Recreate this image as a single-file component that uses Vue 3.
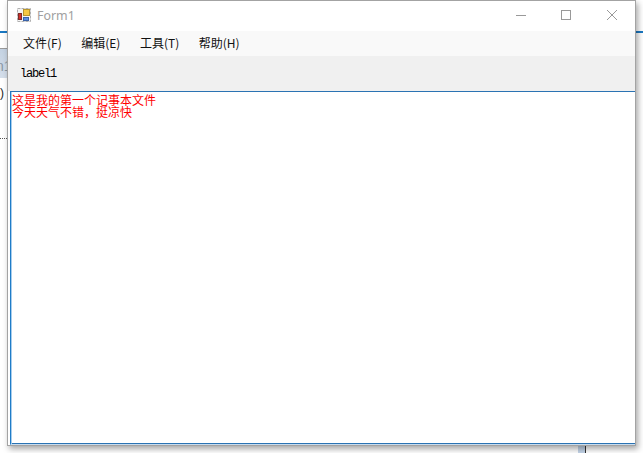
<script setup>
const menus = ['文件(F)', '编辑(E)', '工具(T)', '帮助(H)']
</script>

<template>
  <div class="desktop">
    <div class="peek-bar"></div>
    <div class="peek-tab">n1</div>
    <div class="peek-paren">)</div>
    <div class="peek-dots"></div>
    <div class="peek-right"></div>
    <div class="peek-bottom"><i></i><b></b></div>
    <div class="window">
      <div class="titlebar">
        <svg class="app-icon" width="16" height="16" viewBox="0 0 16 16">
          <rect x="0.5" y="0.5" width="13" height="13" fill="#f4f4f4" stroke="#b0b0b0" stroke-dasharray="3 1" />
          <rect x="6.5" y="1.5" width="6" height="6" fill="#f6c843" stroke="#b8962f" />
          <rect x="1.5" y="5.5" width="3" height="6" fill="#d0302a" stroke="#7c2b28" />
          <rect x="6.5" y="9.5" width="5" height="3" fill="#5a8fe0" stroke="#3a62a8" />
        </svg>
        <span class="title">Form1</span>
        <div class="controls">
          <svg width="12" height="12" viewBox="0 0 12 12"><path d="M0 6.5H10" stroke="#999" /></svg>
          <svg width="12" height="12" viewBox="0 0 12 12"><rect x="0.5" y="1.5" width="9" height="9" fill="none" stroke="#999" /></svg>
          <svg width="12" height="12" viewBox="0 0 12 12"><path d="M1 1L11 11M11 1L1 11" stroke="#999" /></svg>
        </div>
      </div>
      <div class="menubar">
        <span v-for="m in menus" :key="m" class="menu-item">{{ m }}</span>
      </div>
      <div class="labelbar"><span class="label">label1</span></div>
      <div class="editor">
        <div>这是我的第一个记事本文件</div>
        <div>今天天气不错，挺凉快</div>
      </div>
    </div>
  </div>
</template>

<style>
html, body { margin: 0; padding: 0; background: #fff; overflow: hidden; }
</style>

<style scoped>
.desktop {
  position: relative;
  width: 643px;
  height: 453px;
  overflow: hidden;
  background: #fff;
}
.peek-bar { position: absolute; left: 0; top: 31px; width: 7px; height: 2px; background: #1a78c2; }
.peek-tab {
  position: absolute; left: 0; top: 48px; width: 7px; height: 29px;
  border-top: 1px solid #9a9a9a;
  background: linear-gradient(#c4d2e2, #d4deea);
  color: #8a97a5; font: 14px/34px "Liberation Sans", sans-serif; overflow: hidden; text-indent: -4px;
}
.peek-paren { position: absolute; left: 0; top: 85px; font: 12px/16px "Liberation Sans", sans-serif; color: #222; }
.peek-dots { position: absolute; left: 0; top: 138px; width: 7px; height: 1px; border-top: 1px dotted #555; }
.peek-right { position: absolute; left: 636px; top: 31px; width: 7px; height: 2px; background: #1a78c2; }
.peek-bottom { position: absolute; left: 578px; top: 445px; height: 8px; display: flex; }
.peek-bottom i { width: 7px; box-sizing: border-box; background: #c3d4e8; }
.peek-bottom b { width: 1px; background: #333; }
.window {
  position: absolute;
  left: 7px;
  top: 0;
  width: 629px;
  height: 446px;
  box-sizing: border-box;
  border: 1px solid #a3a3a3;
  background: #fff;
  box-shadow: 2px 3px 6px rgba(0, 0, 0, 0.35);
  display: flex;
  flex-direction: column;
}
.titlebar { height: 30px; flex: none; display: flex; align-items: center; padding-left: 9px; background: #fff; }
.app-icon { flex: none; }
.title { margin-left: 4px; padding-bottom: 1px; font: 12.4px "Noto Sans", "Open Sans", sans-serif; color: #a0a0a0; }
.controls { margin-left: auto; display: flex; gap: 33px; padding-right: 17px; padding-bottom: 2px; }
.menubar { height: 25px; flex: none; box-sizing: border-box; padding: 0 0 2px 15px; display: flex; align-items: center; gap: 19.5px; background: #f9f9f9; }
.menu-item { font: 12px "Noto Sans CJK SC", "Liberation Sans", sans-serif; color: #111; }
.labelbar { height: 35px; flex: none; display: flex; align-items: center; padding-left: 12px; background: #f0f0f0; }
.label { font: 12px "Liberation Mono", monospace; letter-spacing: -1.2px; color: #000; }
.editor {
  flex: 1;
  margin-left: 2px;
  box-sizing: border-box;
  border-top: 1px solid #2b73b3;
  border-left: 1px solid #1f7cc8;
  border-bottom: 1px solid #c8dcee;
  box-shadow: inset 1px 0 #a8cdec, inset 0 -1px #2b73b3;
  padding: 2px 0 0 1px;
  background: #fff;
  color: #f00;
  font: 12px/12px "Noto Sans CJK SC", sans-serif;
}
</style>
